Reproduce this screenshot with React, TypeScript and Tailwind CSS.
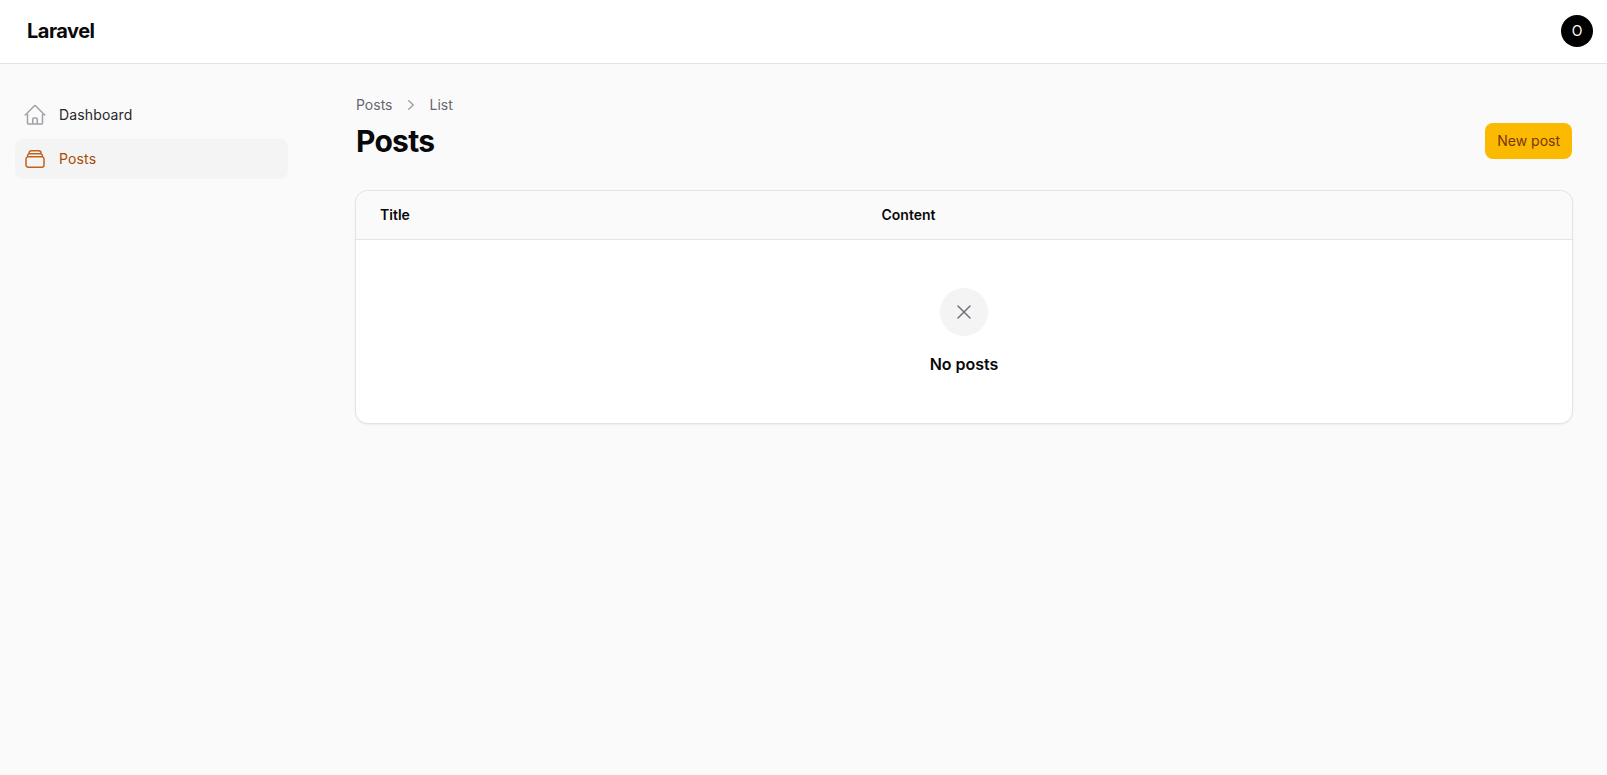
const font = { fontFamily: 'Inter, sans-serif' };

function HomeIcon() {
  return (
    <svg className="w-6 h-6 shrink-0 text-[#a1a1aa]" fill="none" stroke="currentColor" strokeWidth={1.5} viewBox="0 0 24 24">
      <path strokeLinecap="round" strokeLinejoin="round" d="M2.25 12l8.954-8.955c.44-.439 1.152-.439 1.591 0L21.75 12M4.5 9.75v10.125c0 .621.504 1.125 1.125 1.125H9.75v-4.875c0-.621.504-1.125 1.125-1.125h2.25c.621 0 1.125.504 1.125 1.125V21h4.125c.621 0 1.125-.504 1.125-1.125V9.75M8.25 21h8.25" />
    </svg>
  );
}

function StackIcon() {
  return (
    <svg className="w-6 h-6 shrink-0 text-[#c2621a]" fill="none" stroke="currentColor" strokeWidth={1.5} viewBox="0 0 24 24">
      <path strokeLinecap="round" strokeLinejoin="round" d="M6 6.878V6a2.25 2.25 0 012.25-2.25h7.5A2.25 2.25 0 0118 6v.878m-12 0c.235-.083.487-.128.75-.128h10.5c.263 0 .515.045.75.128m-12 0A2.25 2.25 0 004.5 9v.878m13.5-3A2.25 2.25 0 0119.5 9v.878m0 0a2.246 2.246 0 00-.75-.128H5.25c-.263 0-.515.045-.75.128m15 0A2.25 2.25 0 0121 12v6a2.25 2.25 0 01-2.25 2.25H5.25A2.25 2.25 0 013 18v-6c0-.98.626-1.813 1.5-2.122" />
    </svg>
  );
}

export default function App() {
  return (
    <div className="min-h-screen bg-[#fafafa]" style={font}>
      <header className="h-16 bg-white border-b border-[#e4e4e7] flex items-center justify-between pl-[27px] pr-[14px] pb-px">
        <div className="text-xl font-bold tracking-tight text-[#09090b]">Laravel</div>
        <div className="w-8 h-8 rounded-full bg-black text-white text-sm flex items-center justify-center">O</div>
      </header>

      <div className="flex">
        <aside className="w-[321px] shrink-0 pl-[15px] pr-[33px] pt-[31px]">
          <nav className="flex flex-col gap-1">
            <a className="flex items-center gap-3 px-2 py-2 rounded-lg text-sm font-normal tracking-[0.01em] text-[#27272a]">
              <HomeIcon />
              <span>Dashboard</span>
            </a>
            <a className="flex items-center gap-3 px-2 py-2 rounded-lg text-sm font-normal tracking-[0.01em] bg-[#f4f4f5] text-[#a84a05]">
              <StackIcon />
              <span>Posts</span>
            </a>
          </nav>
        </aside>

        <main className="flex-1 min-w-0 max-w-7xl mx-auto px-8 pt-[31px]">
          <div className="flex items-end justify-between">
            <div>
              <nav className="flex items-center gap-x-2 text-sm font-normal text-[#666670]">
                <span>Posts</span>
                <svg className="w-5 h-5 ml-px text-[#a1a1aa]" viewBox="0 0 20 20" fill="currentColor">
                  <path fillRule="evenodd" clipRule="evenodd" d="M7.21 14.77a.75.75 0 01.02-1.06L11.168 10 7.23 6.29a.75.75 0 111.04-1.08l4.5 4.25a.75.75 0 010 1.08l-4.5 4.25a.75.75 0 01-1.06-.02z" />
                </svg>
                <span>List</span>
              </nav>
              <h1 className="mt-2 text-3xl font-bold tracking-tight text-[#09090b]">Posts</h1>
            </div>
            <button className="h-9 px-3 rounded-lg bg-[#fbb900] text-sm font-normal text-[#78350f]">New post</button>
          </div>

          <section className="mt-8 bg-white rounded-xl ring-1 ring-[#e4e4e7] shadow-sm overflow-hidden">
            <div className="flex h-[49px] items-center bg-[#fafafa] border-b border-[#e4e4e7] pl-6 text-sm font-semibold text-[#09090b]">
              <div className="w-[501.5px]">Title</div>
              <div>Content</div>
            </div>
            <div className="flex flex-col items-center pt-12 pb-[47px]">
              <div className="w-12 h-12 rounded-full bg-[#f4f4f5] flex items-center justify-center">
                <svg className="w-6 h-6 text-[#71717a]" fill="none" stroke="currentColor" strokeWidth={1.5} viewBox="0 0 24 24">
                  <path strokeLinecap="round" strokeLinejoin="round" d="M6 18L18 6M6 6l12 12" />
                </svg>
              </div>
              <h4 className="mt-4 text-base font-semibold text-[#09090b]">No posts</h4>
            </div>
          </section>
        </main>
      </div>
    </div>
  );
}
